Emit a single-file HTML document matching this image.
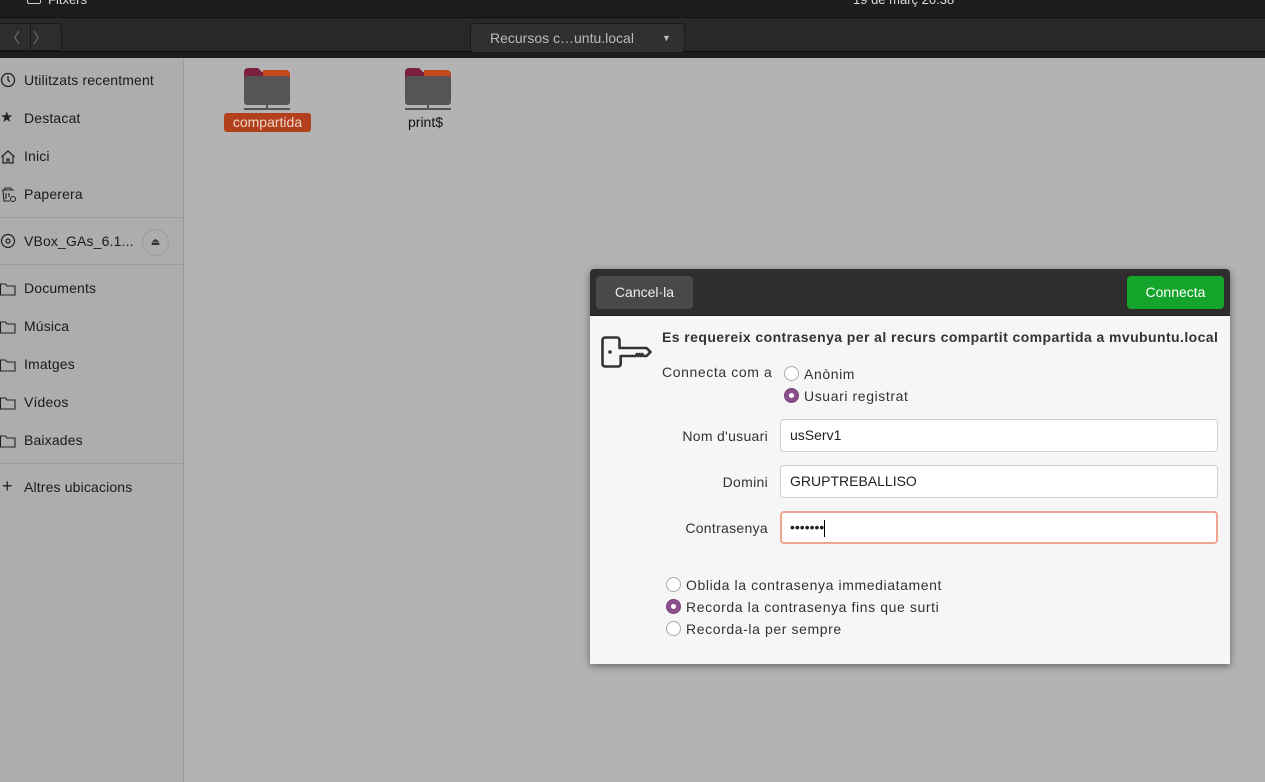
<!DOCTYPE html>
<html><head><meta charset="utf-8"><style>
*{margin:0;padding:0;box-sizing:border-box}
body{width:1265px;height:782px;overflow:hidden;background:#b3b3b3;font-family:"Liberation Sans",sans-serif;font-size:14px;color:#222;position:relative}
.top{position:absolute;left:0;top:0;width:1265px;height:11px;background:#1d1d1d;color:#ddd;font-size:13px;overflow:hidden}
.hdr{position:absolute;left:0;top:11px;width:1265px;height:47px;background:#1d1d1d}
.hdrin{position:absolute;left:0;top:6px;width:1265px;height:35px;background:#282828;border-top:1px solid #111;border-bottom:1px solid #111}
.side{position:absolute;left:0;top:58px;width:184px;height:724px;background:#adadad;border-right:1px solid #9a9a9a}
.it{position:absolute;left:24px;color:#1a1a1a;font-size:14px;letter-spacing:0.15px}
.ic{position:absolute;left:0}
.sep{position:absolute;left:0;width:183px;height:1px;background:#9c9c9c}
.dlg{position:absolute;left:590px;top:269px;width:640px;height:395px;background:#f6f6f6;box-shadow:0 2px 8px rgba(0,0,0,.45);border-radius:4px 4px 0 0;overflow:hidden}
.dh{height:47px;background:#2f2d2d;position:relative;border-bottom:1px solid #222}
.btn{position:absolute;top:7px;height:33px;border-radius:4px;color:#eee;font-size:14px;line-height:33px;text-align:center}
.lbl{position:absolute;text-align:right;width:178px;left:0;color:#333;letter-spacing:0.3px}
.inp{position:absolute;left:190px;width:438px;height:33px;background:#fff;border:1px solid #cfcfcf;border-radius:4px;padding-left:9px;line-height:31px;color:#222}
.rad{position:absolute;width:15px;height:15px;border-radius:50%;border:1px solid #aaa;background:#fff}
.rad.on{background:#8b4f8c;border-color:#7a407b}
.rad.on:after{content:"";position:absolute;left:4px;top:4px;width:5px;height:5px;border-radius:50%;background:#fff}
.rt{position:absolute;color:#333;letter-spacing:0.6px}
</style></head><body>
<div class="top"><span style="position:absolute;left:27px;top:-6px;width:14px;height:10px;border:1.5px solid #ccc;border-radius:2px"></span><span style="position:absolute;left:48px;top:-8px">Fitxers</span><span style="position:absolute;left:853px;top:-8px">19 de març 20:38</span></div>
<div class="hdr"><div class="hdrin">
<div style="position:absolute;left:-4px;top:5px;width:66px;height:28px;border:1px solid #1a1a1a;border-radius:4px;background:#2d2d2d"><div style="position:absolute;left:33px;top:0;width:1px;height:26px;background:#1a1a1a"></div><span style="position:absolute;left:9px;top:4px;color:#777">〈</span><span style="position:absolute;left:36px;top:4px;color:#777">〉</span></div>
<div style="position:absolute;left:470px;top:5px;width:215px;height:30px;border:1px solid #1a1a1a;border-radius:4px;background:#303030;color:#bbb;line-height:28px;padding-left:19px">Recursos c…untu.local<span style="position:absolute;left:191px;top:0;font-size:9px;color:#bbb">▼</span></div>
</div></div>
<div class="side">
<svg class="ic" style="top:14px" width="18" height="18" viewBox="0 0 18 18"><circle cx="8" cy="8" r="6.5" fill="none" stroke="#222" stroke-width="1.3"/><path d="M8 4v4l2 2" stroke="#222" fill="none" stroke-width="1.3"/></svg>
<div class="it" style="top:14px">Utilitzats recentment</div>
<div class="ic" style="top:50px;left:0;font-size:15px;color:#222">★</div><div class="it" style="top:52px">Destacat</div>
<svg class="ic" style="top:90px" width="18" height="18" viewBox="0 0 18 18"><path d="M1.5 9L8 3l6.5 6M3 8v7h4v-4h2v4h4V8" fill="none" stroke="#222" stroke-width="1.2"/></svg><div class="it" style="top:90px">Inici</div>
<svg class="ic" style="top:128px" width="18" height="18" viewBox="0 0 18 18"><path d="M2 4h12M5 4V2h6v2M3 4l1 11h6M6 7v6M9 7v4" fill="none" stroke="#222" stroke-width="1.1"/><circle cx="13" cy="13" r="2.5" fill="none" stroke="#222"/></svg><div class="it" style="top:128px">Paperera</div>
<div class="sep" style="top:159px"></div>
<svg class="ic" style="top:175px" width="18" height="18" viewBox="0 0 18 18"><circle cx="8" cy="8" r="6.5" fill="none" stroke="#222" stroke-width="1.2"/><circle cx="8" cy="8" r="2" fill="none" stroke="#222" stroke-width="1.2"/></svg><div class="it" style="top:175px">VBox_GAs_6.1...</div>
<div style="position:absolute;left:142px;top:171px;width:27px;height:27px;border-radius:50%;border:1px solid #999;font-size:10px;text-align:center;line-height:25px;color:#333">⏏</div>
<div class="sep" style="top:206px"></div>
<div class="it" style="top:222px">Documents</div><div class="it" style="top:260px">Música</div><div class="it" style="top:298px">Imatges</div><div class="it" style="top:336px">Vídeos</div><div class="it" style="top:374px">Baixades</div>
<svg class="ic" style="top:223px" width="18" height="170" viewBox="0 0 18 170"><g fill="none" stroke="#222" stroke-width="1.1"><path d="M0.5 3h5l1.5 2h8v9H0.5z"/><path d="M0.5 41h5l1.5 2h8v9H0.5z"/><path d="M0.5 79h5l1.5 2h8v9H0.5z"/><path d="M0.5 117h5l1.5 2h8v9H0.5z"/><path d="M0.5 155h5l1.5 2h8v9H0.5z"/></g></svg>
<div class="sep" style="top:405px"></div>
<div class="ic" style="top:418px;left:2px;font-size:18px;color:#222">+</div><div class="it" style="top:421px">Altres ubicacions</div>
</div>
<svg style="position:absolute;left:243px;top:66px" width="48" height="46" viewBox="0 0 48 46"><path d="M1 6a4 4 0 0 1 4-4h10l4 4h24a4 4 0 0 1 4 4v4H1z" fill="#7b2040"/><path d="M20 4h23a4 4 0 0 1 4 4v4H20z" fill="#c5471e"/><rect x="1" y="10" width="46" height="29" rx="3" fill="#555"/><path d="M24 39v4M1 43h46" stroke="#555" stroke-width="2"/></svg>
<div style="position:absolute;left:224px;top:113px;width:87px;height:19px;background:#b3401c;border-radius:3px;color:#f1d6cc;text-align:center;line-height:19px">compartida</div>
<svg style="position:absolute;left:404px;top:66px" width="48" height="46" viewBox="0 0 48 46"><path d="M1 6a4 4 0 0 1 4-4h10l4 4h24a4 4 0 0 1 4 4v4H1z" fill="#7b2040"/><path d="M20 4h23a4 4 0 0 1 4 4v4H20z" fill="#c5471e"/><rect x="1" y="10" width="46" height="29" rx="3" fill="#555"/><path d="M24 39v4M1 43h46" stroke="#555" stroke-width="2"/></svg>
<div style="position:absolute;left:408px;top:114px;color:#111">print$</div>
<div class="dlg">
<div class="dh"><div class="btn" style="left:6px;width:97px;background:#4a4848">Cancel·la</div><div class="btn" style="left:537px;width:97px;background:#14a32b;color:#fff">Connecta</div></div>
<svg style="position:absolute;left:11px;top:67px" width="52" height="32" viewBox="0 0 52 32"><path d="M4 1.5h12a2.5 2.5 0 0 1 2.5 2.5v8h27l4 4-4 4h-3l-1.3-2-1.3 2-1.3-2-1.3 2-1.3-2-1.3 2h-15v8a2.5 2.5 0 0 1-2.5 2.5H4A2.5 2.5 0 0 1 1.5 28V4A2.5 2.5 0 0 1 4 1.5z" fill="none" stroke="#333" stroke-width="2.6" stroke-linejoin="round"/><circle cx="9" cy="16" r="1.8" fill="#333"/></svg>
<div style="position:absolute;left:72px;top:60px;font-weight:bold;color:#333;font-size:14px;letter-spacing:0.42px">Es requereix contrasenya per al recurs compartit compartida a mvubuntu.local</div>
<div class="rt" style="left:72px;top:95px">Connecta com a</div>
<div class="rad" style="left:194px;top:97px"></div><div class="rt" style="left:214px;top:97px">Anònim</div>
<div class="rad on" style="left:194px;top:119px"></div><div class="rt" style="left:214px;top:119px">Usuari registrat</div>
<div class="lbl" style="top:159px">Nom d'usuari</div><div class="inp" style="top:150px">usServ1</div>
<div class="lbl" style="top:205px">Domini</div><div class="inp" style="top:196px">GRUPTREBALLISO</div>
<div class="lbl" style="top:251px">Contrasenya</div><div class="inp" style="top:242px;border:2px solid #f2a58e;line-height:29px;padding-left:8px">•••••••<span style="display:inline-block;width:1px;height:17px;background:#000;vertical-align:middle"></span></div>
<div class="rad" style="left:76px;top:308px"></div><div class="rt" style="left:96px;top:308px">Oblida la contrasenya immediatament</div>
<div class="rad on" style="left:76px;top:330px"></div><div class="rt" style="left:96px;top:330px">Recorda la contrasenya fins que surti</div>
<div class="rad" style="left:76px;top:352px"></div><div class="rt" style="left:96px;top:352px">Recorda-la per sempre</div>
</div>
</body></html>
